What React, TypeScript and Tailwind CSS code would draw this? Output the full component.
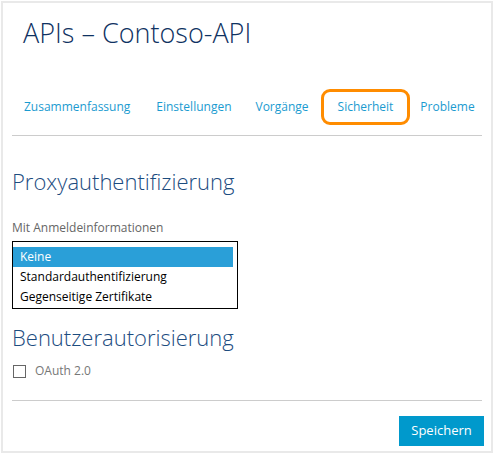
import React from "react";

const tabs = ["Zusammenfassung", "Einstellungen", "Vorgänge", "Sicherheit", "Probleme"];
const options = ["Keine", "Standardauthentifizierung", "Gegenseitige Zertifikate"];

export default function App() {
  return (
    <div
      className="w-[495px] h-[455px] bg-white p-[1px]"
      style={{ fontFamily: '"Open Sans", "Noto Sans", sans-serif' }}
    >
      <div className="h-[452px] w-[492px] border-2 border-[#e9e9e9] flex flex-col">
        {/* Header */}
        <h1 className="pl-[20px] pt-[13px] text-[27px] leading-[34px] font-light text-[#0f3262]">
          APIs – Contoso-API
        </h1>

        {/* Tabs */}
        <div className="mt-[39px] mx-[9px] flex items-center h-[36px] text-[12px] text-[#1a9bd0]">
          <span className="ml-[12px]">{tabs[0]}</span>
          <span className="ml-[26px]">{tabs[1]}</span>
          <span className="ml-[24px]">{tabs[2]}</span>
          <span className="ml-[12px] h-[36px] px-[14px] flex items-center border-[3px] border-[#ff8c00] rounded-[9px]">
            {tabs[3]}
          </span>
          <span className="ml-[10px]">{tabs[4]}</span>
        </div>
        <div className="mx-[9px] mt-[10px] h-px bg-[#cccccc]" />

        {/* Proxy auth */}
        <div className="px-[9px]">
          <h2 className="mt-[30px] text-[22px] leading-[30px] font-light text-[#1c4c7f]">
            Proxyauthentifizierung
          </h2>
          <div className="mt-[23px] text-[12px] leading-[18px] text-[#666666]">
            Mit Anmeldeinformationen
          </div>
          <div className="mt-[4px] w-[226px] h-[68px] border border-black pt-[5px] text-[12px] text-black">
            {options.map((o, i) => (
              <div
                key={o}
                className={
                  "h-[20px] leading-[20px] px-[7px] mr-[4px] " +
                  (i === 0 ? "bg-[#2a9fd8] text-white" : "")
                }
              >
                {o}
              </div>
            ))}
          </div>

          <h2 className="mt-[13px] text-[22px] leading-[30px] font-light text-[#1c4c7f]">
            Benutzerautorisierung
          </h2>
          <label className="mt-[10px] flex items-center gap-[9px] text-[12px] text-[#777777]">
            <span className="ml-[1px] w-[13px] h-[13px] border border-[#666666]" />
            OAuth 2.0
          </label>
        </div>

        <div className="mx-[9px] mt-[20px] h-px bg-[#cccccc]" />

        <div className="flex justify-end pr-[7px] mt-[15px]">
          <button className="w-[85px] h-[30px] bg-[#0099cc] text-white text-[13px]">
            Speichern
          </button>
        </div>
      </div>
    </div>
  );
}
